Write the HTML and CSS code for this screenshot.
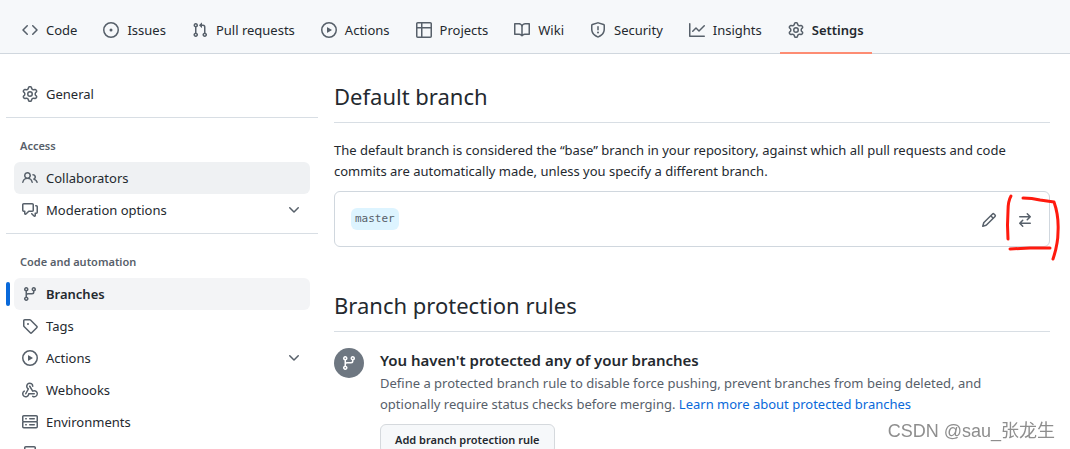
FILE: index.html
```
<!DOCTYPE html>
<html lang="en">
<head>
<meta charset="utf-8">
<meta name="viewport" content="width=device-width, initial-scale=1">
<title>Branches</title>
<link rel="stylesheet" href="styles.css">
</head>
<body>
<svg class="sprite" aria-hidden="true">
  <symbol id="i-code" viewBox="0 0 16 16"><path d="m11.28 3.22 4.25 4.25a.75.75 0 0 1 0 1.06l-4.25 4.25a.749.749 0 0 1-1.275-.326.749.749 0 0 1 .215-.734L13.94 8l-3.72-3.72a.749.749 0 0 1 .326-1.275.749.749 0 0 1 .734.215Zm-6.56 0a.751.751 0 0 1 1.042.018.751.751 0 0 1 .018 1.042L2.06 8l3.72 3.72a.749.749 0 0 1-.326 1.275.749.749 0 0 1-.734-.215L.47 8.53a.75.75 0 0 1 0-1.06Z"/></symbol>
  <symbol id="i-issue" viewBox="0 0 16 16"><path d="M8 9.5a1.5 1.5 0 1 0 0-3 1.5 1.5 0 0 0 0 3Z"/><path d="M8 0a8 8 0 1 1 0 16A8 8 0 0 1 8 0ZM1.5 8a6.5 6.5 0 1 0 13 0 6.5 6.5 0 0 0-13 0Z"/></symbol>
  <symbol id="i-pull" viewBox="0 0 16 16"><path d="M1.5 3.25a2.25 2.25 0 1 1 3 2.122v5.256a2.251 2.251 0 1 1-1.5 0V5.372A2.25 2.25 0 0 1 1.5 3.25Zm5.677-.177L9.573.677A.25.25 0 0 1 10 .854V2.5h1A2.5 2.5 0 0 1 13.5 5v5.628a2.251 2.251 0 1 1-1.5 0V5a1 1 0 0 0-1-1h-1v1.646a.25.25 0 0 1-.427.177L7.177 3.427a.25.25 0 0 1 0-.354ZM3.75 2.5a.75.75 0 1 0 0 1.5.75.75 0 0 0 0-1.5Zm0 9.5a.75.75 0 1 0 0 1.5.75.75 0 0 0 0-1.5Zm8.25.75a.75.75 0 1 0 1.5 0 .75.75 0 0 0-1.5 0Z"/></symbol>
  <symbol id="i-play" viewBox="0 0 16 16"><path d="M8 0a8 8 0 1 1 0 16A8 8 0 0 1 8 0ZM1.5 8a6.5 6.5 0 1 0 13 0 6.5 6.5 0 0 0-13 0Zm4.879-2.773 4.264 2.559a.25.25 0 0 1 0 .428l-4.264 2.559A.25.25 0 0 1 6 10.559V5.442a.25.25 0 0 1 .379-.215Z"/></symbol>
  <symbol id="i-table" viewBox="0 0 16 16"><path d="M0 1.75C0 .784.784 0 1.75 0h12.5C15.216 0 16 .784 16 1.75v12.5A1.75 1.75 0 0 1 14.25 16H1.75A1.75 1.75 0 0 1 0 14.25ZM6.5 6.5v8h7.75a.25.25 0 0 0 .25-.25V6.5Zm8-1.5V1.75a.25.25 0 0 0-.25-.25H6.5V5Zm-13 1.5v7.75c0 .138.112.25.25.25H5v-8ZM5 5V1.5H1.75a.25.25 0 0 0-.25.25V5Z"/></symbol>
  <symbol id="i-book" viewBox="0 0 16 16"><path d="M0 1.75A.75.75 0 0 1 .75 1h4.253c1.227 0 2.317.59 3 1.501A3.743 3.743 0 0 1 11.006 1h4.245a.75.75 0 0 1 .75.75v10.5a.75.75 0 0 1-.75.75h-4.507a2.25 2.25 0 0 0-1.591.659l-.622.621a.75.75 0 0 1-1.06 0l-.622-.621A2.25 2.25 0 0 0 5.258 13H.75a.75.75 0 0 1-.75-.75Zm7.251 10.324.004-5.073-.002-2.253A2.25 2.25 0 0 0 5.003 2.5H1.5v9h3.757a3.75 3.75 0 0 1 1.994.574ZM8.755 4.75l-.004 7.322a3.752 3.752 0 0 1 1.992-.572H14.5v-9h-3.495a2.25 2.25 0 0 0-2.25 2.25Z"/></symbol>
  <symbol id="i-shield" viewBox="0 0 16 16"><path d="M7.467.133a1.748 1.748 0 0 1 1.066 0l5.25 1.68A1.75 1.75 0 0 1 15 3.48V7c0 1.566-.32 3.182-1.303 4.682-.983 1.498-2.585 2.813-5.032 3.855a1.697 1.697 0 0 1-1.33 0c-2.447-1.042-4.049-2.357-5.032-3.855C1.32 10.182 1 8.566 1 7V3.48a1.75 1.75 0 0 1 1.217-1.667Zm.61 1.429a.25.25 0 0 0-.153 0l-5.25 1.68a.25.25 0 0 0-.174.238V7c0 1.358.275 2.666 1.057 3.86.784 1.194 2.121 2.34 4.366 3.297a.196.196 0 0 0 .154 0c2.245-.956 3.582-2.104 4.366-3.298C13.225 9.666 13.5 8.36 13.5 7V3.48a.251.251 0 0 0-.174-.237l-5.25-1.68ZM8.75 4.75v3a.75.75 0 0 1-1.5 0v-3a.75.75 0 0 1 1.5 0ZM9 10.5a1 1 0 1 1-2 0 1 1 0 0 1 2 0Z"/></symbol>
  <symbol id="i-graph" viewBox="0 0 16 16"><path d="M1.5 1.75V13.5h13.75a.75.75 0 0 1 0 1.5H.75a.75.75 0 0 1-.75-.75V1.75a.75.75 0 0 1 1.5 0Zm14.28 2.53-5.25 5.25a.75.75 0 0 1-1.06 0L7 7.06 4.28 9.78a.751.751 0 0 1-1.042-.018.751.751 0 0 1-.018-1.042l3.25-3.25a.75.75 0 0 1 1.06 0L10 7.94l4.72-4.72a.751.751 0 0 1 1.042.018.751.751 0 0 1 .018 1.042Z"/></symbol>
  <symbol id="i-gear" viewBox="0 0 16 16"><path d="M8 0a8.2 8.2 0 0 1 .701.031C9.444.095 9.99.645 10.16 1.29l.288 1.107c.018.066.079.158.212.224.231.114.454.243.668.386.123.082.233.09.299.071l1.103-.303c.644-.176 1.392.021 1.82.63.27.385.506.792.704 1.218.315.675.111 1.422-.364 1.891l-.814.806c-.049.048-.098.147-.088.294.016.257.016.515 0 .772-.01.147.038.246.088.294l.814.806c.475.469.679 1.216.364 1.891a7.977 7.977 0 0 1-.704 1.217c-.428.61-1.176.807-1.82.63l-1.102-.302c-.067-.019-.177-.011-.3.071a5.909 5.909 0 0 1-.668.386c-.133.066-.194.158-.211.224l-.29 1.106c-.168.646-.715 1.196-1.458 1.26a8.006 8.006 0 0 1-1.402 0c-.743-.064-1.289-.614-1.458-1.26l-.289-1.106c-.018-.066-.079-.158-.212-.224a5.738 5.738 0 0 1-.668-.386c-.123-.082-.233-.09-.299-.071l-1.103.303c-.644.176-1.392-.021-1.82-.63a8.12 8.12 0 0 1-.704-1.218c-.315-.675-.111-1.422.363-1.891l.815-.806c.05-.048.098-.147.088-.294a6.214 6.214 0 0 1 0-.772c.01-.147-.038-.246-.088-.294l-.815-.806C.635 6.045.431 5.298.746 4.623a7.92 7.92 0 0 1 .704-1.217c.428-.61 1.176-.807 1.82-.63l1.102.302c.067.019.177.011.3-.071.214-.143.437-.272.668-.386.133-.066.194-.158.211-.224l.29-1.106C6.009.645 6.556.095 7.299.03 7.53.01 7.764 0 8 0Zm-.571 1.525c-.036.003-.108.036-.137.146l-.289 1.105c-.147.561-.549.967-.998 1.189-.173.086-.34.183-.5.29-.417.278-.97.423-1.529.27l-1.103-.303c-.109-.03-.175.016-.195.045-.22.312-.412.644-.573.99-.014.031-.021.11.059.19l.815.806c.411.406.562.957.53 1.456a4.709 4.709 0 0 0 0 .582c.032.499-.119 1.05-.53 1.456l-.815.806c-.081.08-.073.159-.059.19.162.346.353.677.573.989.02.03.085.076.195.046l1.102-.303c.56-.153 1.113-.008 1.53.27.161.107.328.204.501.29.447.222.85.629.997 1.189l.289 1.105c.029.109.101.143.137.146a6.6 6.6 0 0 0 1.142 0c.036-.003.108-.036.137-.146l.289-1.105c.147-.561.549-.967.998-1.189.173-.086.34-.183.5-.29.417-.278.97-.423 1.529-.27l1.103.303c.109.029.175-.016.195-.045.22-.313.411-.644.573-.99.014-.031.021-.11-.059-.19l-.815-.806c-.411-.406-.562-.957-.53-1.456a4.709 4.709 0 0 0 0-.582c-.032-.499.119-1.05.53-1.456l.815-.806c.081-.08.073-.159.059-.19a6.464 6.464 0 0 0-.573-.989c-.02-.03-.085-.076-.195-.046l-1.102.303c-.56.153-1.113.008-1.53-.27a4.44 4.44 0 0 0-.501-.29c-.447-.222-.85-.629-.997-1.189l-.289-1.105c-.029-.11-.101-.143-.137-.146a6.6 6.6 0 0 0-1.142 0ZM11 8a3 3 0 1 1-6 0 3 3 0 0 1 6 0ZM9.5 8a1.5 1.5 0 1 0-3.001.001A1.5 1.5 0 0 0 9.5 8Z"/></symbol>
  <symbol id="i-people" viewBox="0 0 16 16"><path d="M2 5.5a3.5 3.5 0 1 1 5.898 2.549 5.508 5.508 0 0 1 3.034 4.084.75.75 0 1 1-1.482.235 4 4 0 0 0-7.9 0 .75.75 0 0 1-1.482-.236A5.507 5.507 0 0 1 3.102 8.05 3.493 3.493 0 0 1 2 5.5ZM11 4a3.001 3.001 0 0 1 2.22 5.018 5.01 5.01 0 0 1 2.56 3.012.749.749 0 0 1-.885.954.752.752 0 0 1-.549-.514 3.507 3.507 0 0 0-2.522-2.372.75.75 0 0 1-.574-.73v-.352a.75.75 0 0 1 .416-.672A1.5 1.5 0 0 0 11 5.5.75.75 0 0 1 11 4Zm-5.5-.5a2 2 0 1 0-.001 3.999A2 2 0 0 0 5.5 3.5Z"/></symbol>
  <symbol id="i-talk" viewBox="0 0 16 16"><path d="M1.75 1h8.5c.966 0 1.75.784 1.75 1.75v5.5A1.75 1.75 0 0 1 10.25 10H7.061l-2.574 2.573A1.458 1.458 0 0 1 2 11.543V10h-.25A1.75 1.75 0 0 1 0 8.25v-5.5C0 1.784.784 1 1.75 1ZM1.5 2.75v5.5c0 .138.112.25.25.25h1a.75.75 0 0 1 .75.75v2.19l2.72-2.72a.749.749 0 0 1 .53-.22h3.5a.25.25 0 0 0 .25-.25v-5.5a.25.25 0 0 0-.25-.25h-8.5a.25.25 0 0 0-.25.25Zm13 2a.25.25 0 0 0-.25-.25h-.5a.75.75 0 0 1 0-1.5h.5c.966 0 1.75.784 1.75 1.75v5.5A1.75 1.75 0 0 1 14.25 12H14v1.543a1.458 1.458 0 0 1-2.487 1.03L9.22 12.28a.749.749 0 0 1 .326-1.275.749.749 0 0 1 .734.215l2.22 2.22v-2.19a.75.75 0 0 1 .75-.75h1a.25.25 0 0 0 .25-.25Z"/></symbol>
  <symbol id="i-chevron" viewBox="0 0 16 16"><path d="M12.78 5.22a.749.749 0 0 1 0 1.06l-4.25 4.25a.749.749 0 0 1-1.06 0L3.22 6.28a.749.749 0 1 1 1.06-1.06L8 8.939l3.72-3.719a.749.749 0 0 1 1.06 0Z"/></symbol>
  <symbol id="i-branch" viewBox="0 0 16 16"><path d="M9.5 3.25a2.25 2.25 0 1 1 3 2.122V6A2.5 2.5 0 0 1 10 8.5H6a1 1 0 0 0-1 1v1.128a2.251 2.251 0 1 1-1.5 0V5.372a2.25 2.25 0 1 1 1.5 0v1.836A2.493 2.493 0 0 1 6 7h4a1 1 0 0 0 1-1v-.628A2.25 2.25 0 0 1 9.5 3.25Zm-6 0a.75.75 0 1 0 1.5 0 .75.75 0 0 0-1.5 0Zm8.25-.75a.75.75 0 1 0 0 1.5.75.75 0 0 0 0-1.5ZM4.25 12a.75.75 0 1 0 0 1.5.75.75 0 0 0 0-1.5Z"/></symbol>
  <symbol id="i-tag" viewBox="0 0 16 16"><path d="M1 7.775V2.75C1 1.784 1.784 1 2.75 1h5.025c.464 0 .91.184 1.238.513l6.25 6.25a1.75 1.75 0 0 1 0 2.474l-5.026 5.026a1.75 1.75 0 0 1-2.474 0l-6.25-6.25A1.752 1.752 0 0 1 1 7.775Zm1.5 0c0 .066.026.13.073.177l6.25 6.25a.25.25 0 0 0 .354 0l5.025-5.025a.25.25 0 0 0 0-.354l-6.25-6.25a.25.25 0 0 0-.177-.073H2.75a.25.25 0 0 0-.25.25ZM6 5a1 1 0 1 1 0 2 1 1 0 0 1 0-2Z"/></symbol>
  <symbol id="i-webhook" viewBox="0 0 16 16"><path d="M5.5 4.25a2.25 2.25 0 0 1 4.5 0 .75.75 0 0 0 1.5 0 3.75 3.75 0 1 0-6.14 2.889l-2.272 4.258a.75.75 0 0 0 1.324.706L7 7.25a.75.75 0 0 0-.309-1.015A2.25 2.25 0 0 1 5.5 4.25Z"/><path d="M7.364 3.607a.75.75 0 0 1 1.03.257l2.608 4.349a3.75 3.75 0 1 1-.628 6.785.75.75 0 0 1 .752-1.299 2.25 2.25 0 1 0-.033-3.88.75.75 0 0 1-1.03-.256L7.107 4.636a.75.75 0 0 1 .257-1.03Z"/><path d="M2.9 8.776A.75.75 0 0 1 2.625 9.8 2.25 2.25 0 1 0 6 11.75a.75.75 0 0 1 .75-.751h5.5a.75.75 0 0 1 0 1.5H7.425a3.751 3.751 0 1 1-5.55-3.998.75.75 0 0 1 1.024.274Z"/></symbol>
  <symbol id="i-server" viewBox="0 0 16 16"><path d="M1.75 1h12.5c.966 0 1.75.784 1.75 1.75v4c0 .372-.116.717-.314 1 .198.283.314.628.314 1v4a1.75 1.75 0 0 1-1.75 1.75H1.75A1.75 1.75 0 0 1 0 12.75v-4c0-.358.109-.707.314-1a1.739 1.739 0 0 1-.314-1v-4C0 1.784.784 1 1.75 1ZM1.5 2.75v4c0 .138.112.25.25.25h12.5a.25.25 0 0 0 .25-.25v-4a.25.25 0 0 0-.25-.25H1.75a.25.25 0 0 0-.25.25Zm.25 5.75a.25.25 0 0 0-.25.25v4c0 .138.112.25.25.25h12.5a.25.25 0 0 0 .25-.25v-4a.25.25 0 0 0-.25-.25ZM7 4.75A.75.75 0 0 1 7.75 4h4.5a.75.75 0 0 1 0 1.5h-4.5A.75.75 0 0 1 7 4.75ZM7.75 10h4.5a.75.75 0 0 1 0 1.5h-4.5a.75.75 0 0 1 0-1.5ZM3 4.75A.75.75 0 0 1 3.75 4h.5a.75.75 0 0 1 0 1.5h-.5A.75.75 0 0 1 3 4.75ZM3.75 10h.5a.75.75 0 0 1 0 1.5h-.5a.75.75 0 0 1 0-1.5Z"/></symbol>
  <symbol id="i-codespaces" viewBox="0 0 16 16"><path d="M0 11.25c0-.966.784-1.75 1.75-1.75h12.5c.966 0 1.75.784 1.75 1.75v3A1.75 1.75 0 0 1 14.25 16H1.75A1.75 1.75 0 0 1 0 14.25Zm2-9.5C2 .784 2.784 0 3.75 0h8.5C13.216 0 14 .784 14 1.75v5a1.75 1.75 0 0 1-1.75 1.75h-8.5A1.75 1.75 0 0 1 2 6.75Zm1.75-.25a.25.25 0 0 0-.25.25v5c0 .138.112.25.25.25h8.5a.25.25 0 0 0 .25-.25v-5a.25.25 0 0 0-.25-.25Zm-2 9.5a.25.25 0 0 0-.25.25v3c0 .138.112.25.25.25h12.5a.25.25 0 0 0 .25-.25v-3a.25.25 0 0 0-.25-.25Z"/></symbol>
  <symbol id="i-pencil" viewBox="0 0 16 16"><path d="M11.013 1.427a1.75 1.75 0 0 1 2.474 0l1.086 1.086a1.75 1.75 0 0 1 0 2.474l-8.61 8.61c-.21.21-.47.364-.756.445l-3.251.93a.75.75 0 0 1-.927-.928l.929-3.25c.081-.286.235-.547.445-.758l8.61-8.61Zm.176 4.823L9.75 4.81l-6.286 6.287a.253.253 0 0 0-.064.108l-.558 1.953 1.953-.558a.253.253 0 0 0 .108-.064Zm1.238-3.763a.25.25 0 0 0-.354 0L10.811 3.75l1.439 1.44 1.263-1.263a.25.25 0 0 0 0-.354Z"/></symbol>
  <symbol id="i-switch" viewBox="0 0 16 16"><path d="M5.22 14.78a.75.75 0 0 0 1.06-1.06L4.56 12h8.69a.75.75 0 0 0 0-1.5H4.56l1.72-1.72a.75.75 0 0 0-1.06-1.06l-3 3a.75.75 0 0 0 0 1.06l3 3Zm5.56-6.5a.75.75 0 1 1-1.06-1.06l1.72-1.72H2.75a.75.75 0 0 1 0-1.5h8.69L9.72 2.28a.75.75 0 0 1 1.06-1.06l3 3a.75.75 0 0 1 0 1.06l-3 3Z"/></symbol>
</svg>

<header class="topbar">
  <nav class="tabs" aria-label="Repository">
    <a class="tab" href="#"><svg class="icon" aria-hidden="true"><use href="#i-code"/></svg>Code</a>
    <a class="tab" href="#"><svg class="icon" aria-hidden="true"><use href="#i-issue"/></svg>Issues</a>
    <a class="tab" href="#"><svg class="icon" aria-hidden="true"><use href="#i-pull"/></svg>Pull requests</a>
    <a class="tab" href="#"><svg class="icon" aria-hidden="true"><use href="#i-play"/></svg>Actions</a>
    <a class="tab" href="#"><svg class="icon" aria-hidden="true"><use href="#i-table"/></svg>Projects</a>
    <a class="tab" href="#"><svg class="icon" aria-hidden="true"><use href="#i-book"/></svg>Wiki</a>
    <a class="tab" href="#"><svg class="icon" aria-hidden="true"><use href="#i-shield"/></svg>Security</a>
    <a class="tab" href="#"><svg class="icon" aria-hidden="true"><use href="#i-graph"/></svg>Insights</a>
    <a class="tab tab-current" href="#" aria-current="page"><svg class="icon" aria-hidden="true"><use href="#i-gear"/></svg>Settings</a>
  </nav>
</header>

<div class="layout">
  <nav class="sidebar" aria-label="Settings">
    <div class="group">
      <a class="item" href="#"><svg class="icon" aria-hidden="true"><use href="#i-gear"/></svg>General</a>
    </div>
    <div class="group">
      <h3 class="group-title">Access</h3>
      <a class="item item-hover" href="#"><svg class="icon" aria-hidden="true"><use href="#i-people"/></svg>Collaborators</a>
      <button class="item" type="button" aria-expanded="false"><svg class="icon" aria-hidden="true"><use href="#i-talk"/></svg>Moderation options<svg class="icon chevron" aria-hidden="true"><use href="#i-chevron"/></svg></button>
    </div>
    <div class="group">
      <h3 class="group-title">Code and automation</h3>
      <a class="item item-current" href="#" aria-current="page"><svg class="icon" aria-hidden="true"><use href="#i-branch"/></svg>Branches</a>
      <a class="item" href="#"><svg class="icon" aria-hidden="true"><use href="#i-tag"/></svg>Tags</a>
      <button class="item" type="button" aria-expanded="false"><svg class="icon" aria-hidden="true"><use href="#i-play"/></svg>Actions<svg class="icon chevron" aria-hidden="true"><use href="#i-chevron"/></svg></button>
      <a class="item" href="#"><svg class="icon" aria-hidden="true"><use href="#i-webhook"/></svg>Webhooks</a>
      <a class="item" href="#"><svg class="icon" aria-hidden="true"><use href="#i-server"/></svg>Environments</a>
      <div class="item"><svg class="icon" aria-hidden="true"><use href="#i-codespaces"/></svg></div>
    </div>
  </nav>

  <main class="content">
    <section class="section">
      <h2 class="title">Default branch</h2>
      <p class="lead">The default branch is considered the “base” branch in your repository, against which all pull requests and code commits are automatically made, unless you specify a different branch.</p>
      <div class="box">
        <span class="branch-name">master</span>
        <div class="actions">
          <button class="icon-button" type="button" aria-label="Rename branch"><svg class="icon" aria-hidden="true"><use href="#i-pencil"/></svg></button>
          <button class="icon-button" type="button" aria-label="Switch to another branch"><svg class="icon" aria-hidden="true"><use href="#i-switch"/></svg></button>
        </div>
        <svg class="marker" viewBox="0 0 56 70" aria-hidden="true">
          <path d="M7 4Q4 9 4 19Q3 33 4 47"/>
          <path d="M19 6Q28 6 36 8L50 10Q55 24 54 40Q54 52 49 67"/>
          <path d="M6 57L26 56L46 56"/>
        </svg>
      </div>
    </section>

    <section class="section">
      <h2 class="title">Branch protection rules</h2>
      <div class="notice">
        <span class="badge"><svg class="icon" aria-hidden="true"><use href="#i-branch"/></svg></span>
        <div class="notice-body">
          <h4 class="notice-title">You haven't protected any of your branches</h4>
          <p class="notice-text">Define a protected branch rule to disable force pushing, prevent branches from being deleted, and optionally require status checks before merging. <a class="link" href="#">Learn more about protected branches</a></p>
          <button class="button" type="button">Add branch protection rule</button>
        </div>
      </div>
    </section>
  </main>
</div>
<div class="watermark">CSDN @sau_张龙生</div>
</body>
</html>
```
FILE: styles.css
```
* {
  box-sizing: border-box;
}

body {
  margin: 0;
  height: 100vh;
  overflow: hidden;
  background: #ffffff;
  color: #24292f;
  font-family: "Noto Sans", "Open Sans", sans-serif;
  font-size: 13px;
  line-height: 21px;
}

h2, h3, h4, p {
  margin: 0;
}

a {
  color: inherit;
  text-decoration: none;
}

button {
  font: inherit;
  color: inherit;
  cursor: pointer;
}

.sprite {
  display: none;
}

.icon {
  width: 16px;
  height: 16px;
  flex: none;
  fill: #57606a;
}

.topbar {
  height: 54px;
  padding: 0 14px;
  background: #f6f8fa;
  border-bottom: 1px solid #d0d7de;
}

.tabs {
  display: flex;
  gap: 10px;
}

.tab {
  display: flex;
  align-items: center;
  gap: 8px;
  height: 54px;
  padding: 8px 8px 0;
  border-bottom: 2px solid transparent;
  white-space: nowrap;
}

.tab-current {
  font-weight: 600;
  border-bottom-color: #fd8c73;
}

.layout {
  display: grid;
  grid-template-columns: 312px minmax(0, 1fr);
  gap: 16px;
  padding: 24px 20px 0 6px;
}

.group {
  display: flex;
  flex-direction: column;
  padding: 0 8px 7px;
}

.group + .group {
  border-top: 1px solid #d8dee4;
  padding-top: 8px;
}

.group-title {
  padding: 10px 6px 6px;
  color: #57606a;
  font-size: 11px;
  font-weight: 600;
  line-height: 20px;
}

.item {
  position: relative;
  display: flex;
  align-items: center;
  gap: 8px;
  width: 100%;
  height: 32px;
  padding: 0 8px;
  border: 0;
  border-radius: 6px;
  background: transparent;
  text-align: left;
}

.item-hover {
  background: #eff1f3;
}

.item-current {
  background: #f3f4f6;
  font-weight: 600;
}

.item-current::before {
  content: "";
  position: absolute;
  left: -8px;
  top: 4px;
  width: 4px;
  height: 24px;
  border-radius: 6px;
  background: #0969da;
}

.chevron {
  margin-left: auto;
}

.section {
  padding-bottom: 40px;
}

.title {
  padding-bottom: 8px;
  border-bottom: 1px solid #d8dee4;
  font-size: 22px;
  font-weight: 400;
  line-height: 36px;
}

.lead {
  padding: 17px 0 9px;
}

.box {
  position: relative;
  display: flex;
  align-items: center;
  justify-content: space-between;
  min-height: 56px;
  padding: 0 8px 0 16px;
  border: 1px solid #d0d7de;
  border-radius: 6px;
}

.branch-name {
  padding: 0 4px;
  border-radius: 6px;
  background: #ddf4ff;
  color: #57606a;
  font-family: "DejaVu Sans Mono", monospace;
  font-size: 11px;
  line-height: 22px;
}

.actions {
  display: flex;
  gap: 4px;
  padding-top: 2px;
}

.icon-button {
  display: flex;
  align-items: center;
  justify-content: center;
  width: 32px;
  height: 32px;
  padding: 0;
  border: 0;
  background: transparent;
}

.marker {
  position: absolute;
  top: 0;
  right: -11px;
  width: 56px;
  height: 70px;
  fill: none;
  stroke: #ff1a0e;
  stroke-width: 3;
  stroke-linecap: round;
  stroke-linejoin: round;
  pointer-events: none;
}

.notice {
  display: flex;
  gap: 16px;
  padding: 16px 32px 0 0;
}

.badge {
  display: flex;
  flex: none;
  align-items: center;
  justify-content: center;
  width: 30px;
  height: 30px;
  border-radius: 50%;
  background: #6e7781;
}

.badge .icon {
  fill: #ffffff;
}

.notice-title {
  font-size: 15px;
  font-weight: 600;
  line-height: 25px;
}

.notice-text {
  color: #57606a;
}

.link {
  color: #0969da;
}

.button {
  height: 30px;
  margin-top: 9px;
  padding: 0 14px;
  border: 1px solid #d5d9dd;
  border-radius: 6px;
  background: #f6f8fa;
  font-size: 11px;
  font-weight: 600;
}

.watermark {
  position: fixed;
  right: 15px;
  bottom: 6px;
  color: #8e8e8e;
  font-family: "Liberation Sans", "Noto Sans CJK SC", sans-serif;
  font-size: 18px;
  line-height: 24px;
}
```
